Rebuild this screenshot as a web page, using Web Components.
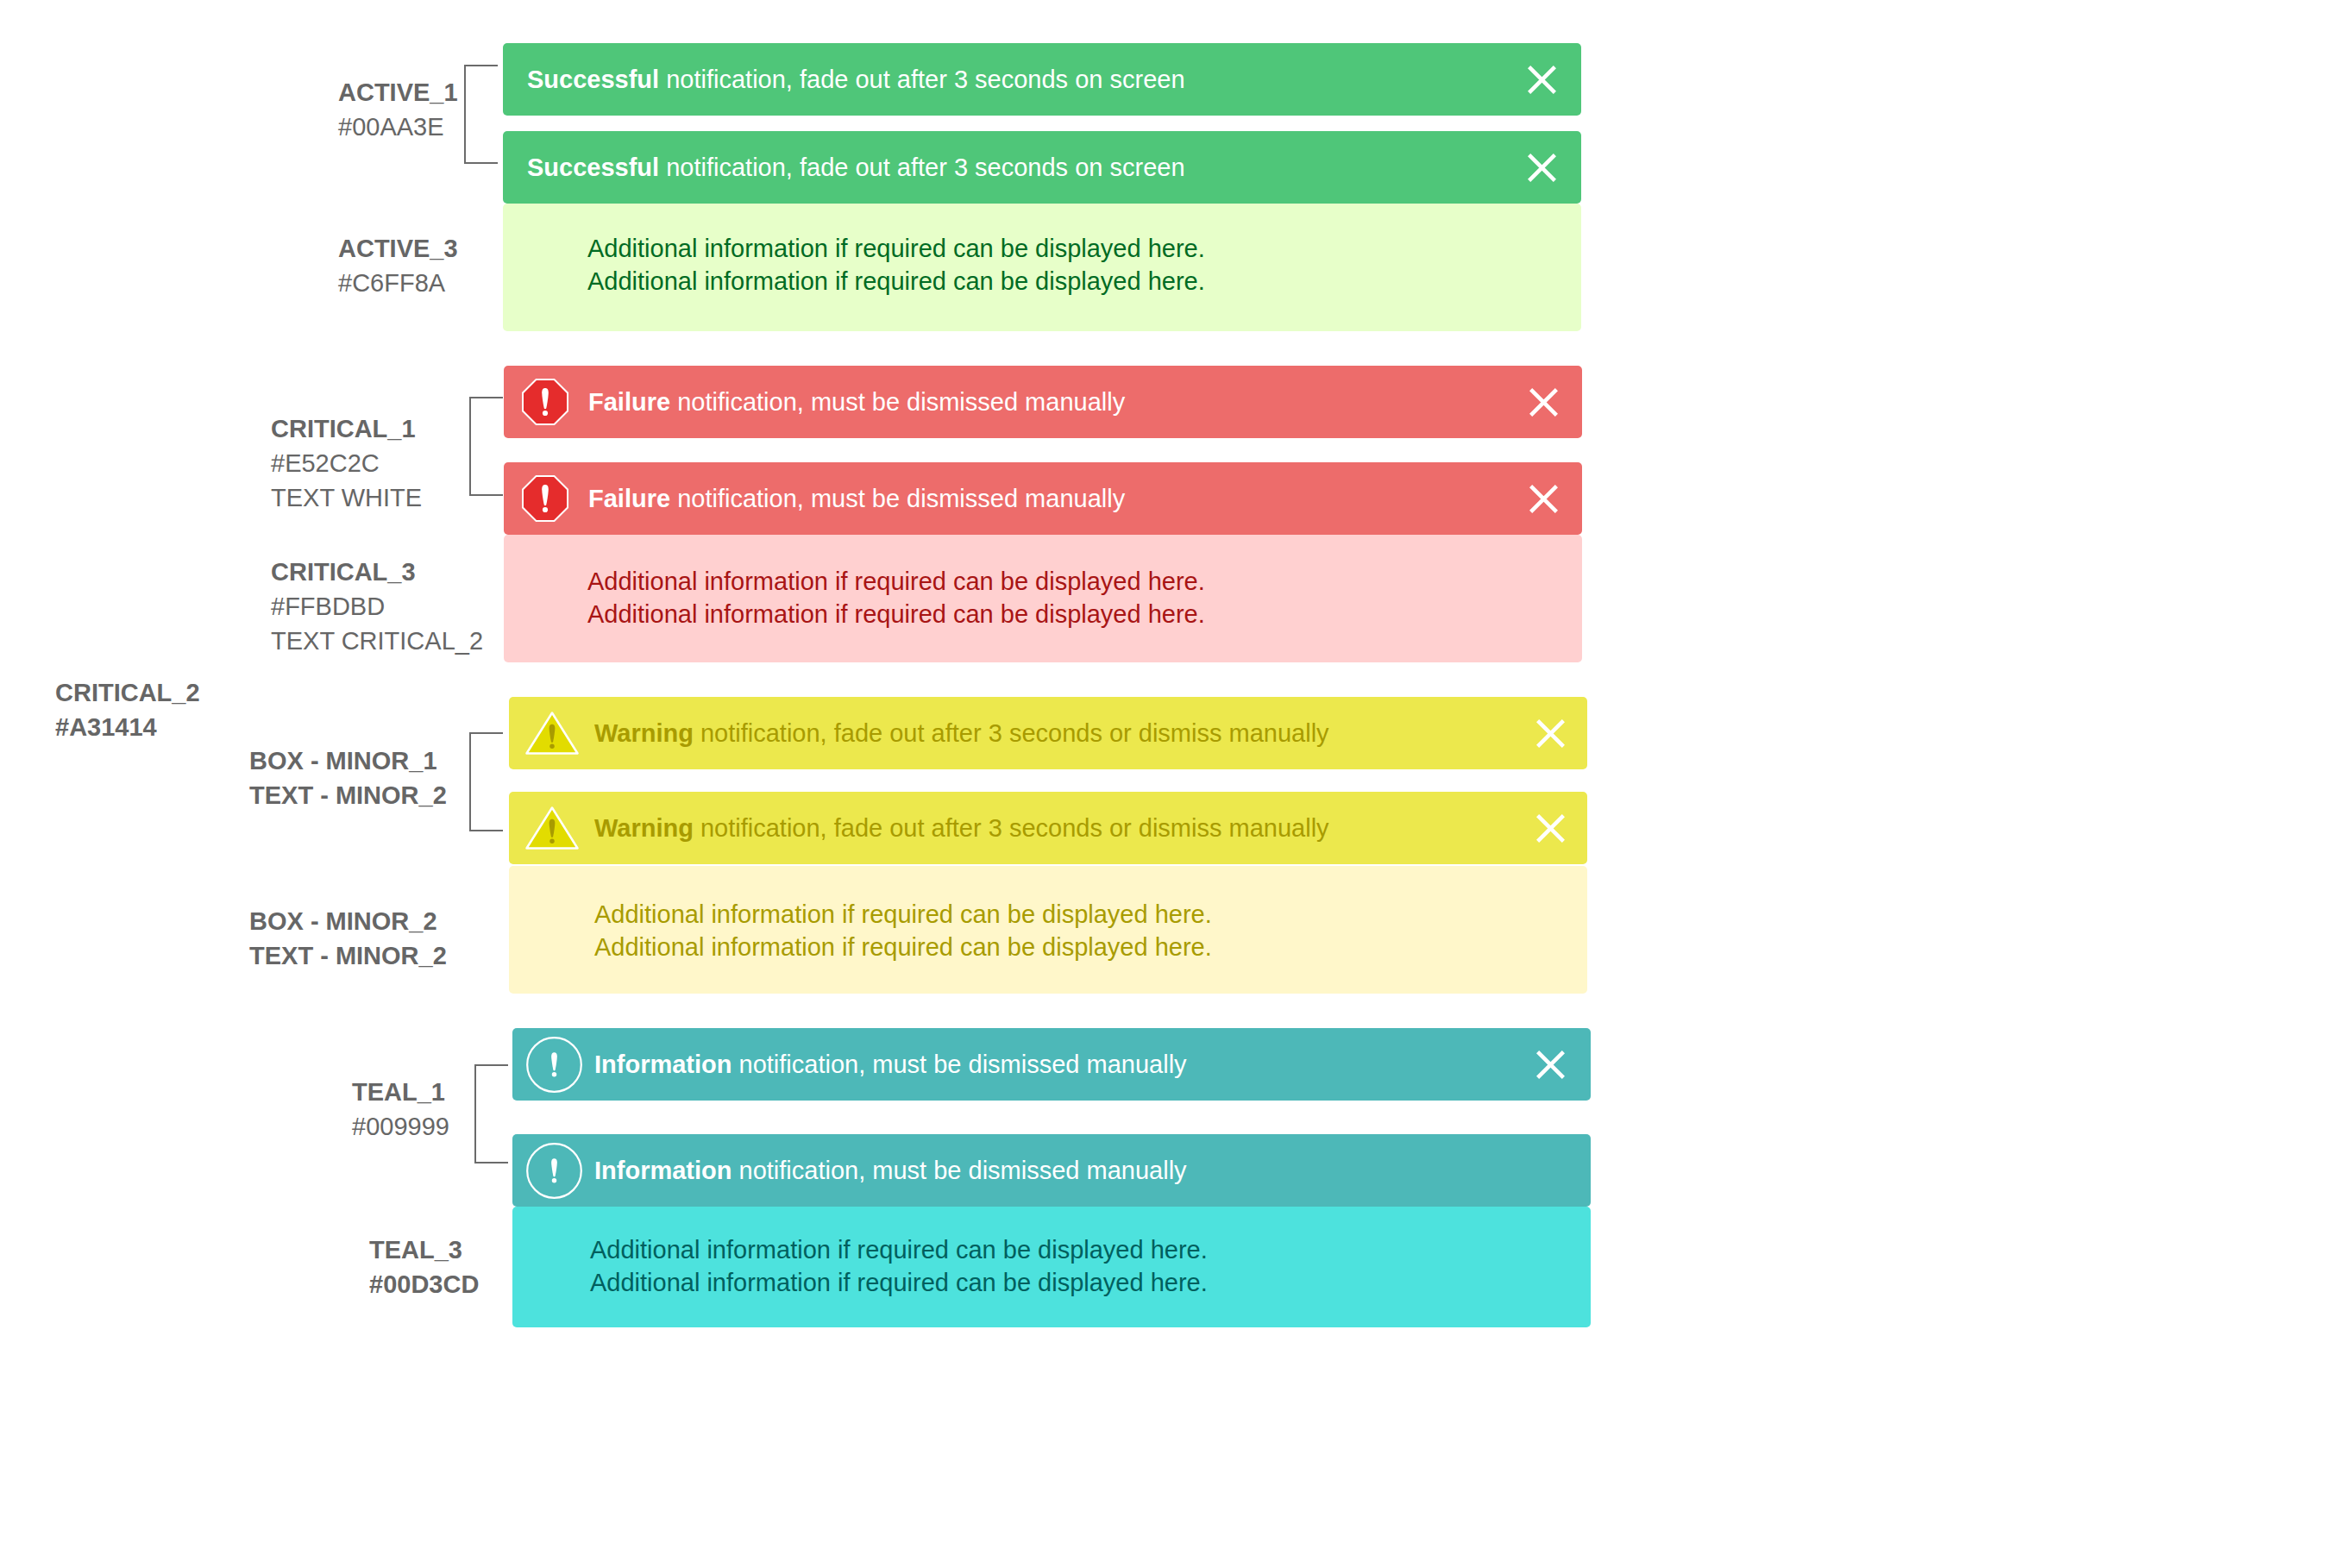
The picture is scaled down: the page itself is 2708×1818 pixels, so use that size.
<!DOCTYPE html>
<html lang="en">
<head>
<meta charset="utf-8">
<title>Notification styles</title>
<style>
body { margin: 0; background: #fff; color: #666; font: 29px/40px "Liberation Sans", Arial, sans-serif; }
</style>
</head>
<body>
<spec-board></spec-board>

<template id="t-board">
<style>
  :host { display: grid; grid-template-columns: 280px minmax(0, 1fr); padding: 50px 0; }
  aside { padding: 733px 0 0 64px; }
  main { display: flex; flex-direction: column; gap: 40px; }
</style>
<aside><colour-note><b>CRITICAL_2</b><b>#A31414</b></colour-note></aside>
<main>
  <spec-group kind="success">
    <colour-note slot="notes"><b>ACTIVE_1</b><span>#00AA3E</span></colour-note>
    <colour-note slot="notes"><b>ACTIVE_3</b><span>#C6FF8A</span></colour-note>
    <notice-bar kind="success" closable><b>Successful</b> notification, fade out after 3 seconds on screen</notice-bar>
    <notice-bar kind="success" closable><b>Successful</b> notification, fade out after 3 seconds on screen
      <span slot="detail">Additional information if required can be displayed here.</span>
      <span slot="detail">Additional information if required can be displayed here.</span>
    </notice-bar>
  </spec-group>
  <spec-group kind="failure">
    <colour-note slot="notes"><b>CRITICAL_1</b><span>#E52C2C</span><span>TEXT WHITE</span></colour-note>
    <colour-note slot="notes"><b>CRITICAL_3</b><span>#FFBDBD</span><span>TEXT CRITICAL_2</span></colour-note>
    <notice-bar kind="failure" closable><b>Failure</b> notification, must be dismissed manually</notice-bar>
    <notice-bar kind="failure" closable><b>Failure</b> notification, must be dismissed manually
      <span slot="detail">Additional information if required can be displayed here.</span>
      <span slot="detail">Additional information if required can be displayed here.</span>
    </notice-bar>
  </spec-group>
  <spec-group kind="warning">
    <colour-note slot="notes"><b>BOX - MINOR_1</b><b>TEXT - MINOR_2</b></colour-note>
    <colour-note slot="notes"><b>BOX - MINOR_2</b><b>TEXT - MINOR_2</b></colour-note>
    <notice-bar kind="warning" closable><b>Warning</b> notification, fade out after 3 seconds or dismiss manually</notice-bar>
    <notice-bar kind="warning" closable><b>Warning</b> notification, fade out after 3 seconds or dismiss manually
      <span slot="detail">Additional information if required can be displayed here.</span>
      <span slot="detail">Additional information if required can be displayed here.</span>
    </notice-bar>
  </spec-group>
  <spec-group kind="info">
    <colour-note slot="notes"><b>TEAL_1</b><span>#009999</span></colour-note>
    <colour-note slot="notes" nested><b>TEAL_3</b><b>#00D3CD</b></colour-note>
    <notice-bar kind="info" closable><b>Information</b> notification, must be dismissed manually</notice-bar>
    <notice-bar kind="info"><b>Information</b> notification, must be dismissed manually
      <span slot="detail">Additional information if required can be displayed here.</span>
      <span slot="detail">Additional information if required can be displayed here.</span>
    </notice-bar>
  </spec-group>
</main>
</template>

<template id="t-note">
<style>
  :host { display: flex; flex-direction: column; white-space: nowrap; }
  :host([nested]) { padding-left: 20px; }
</style>
<slot></slot>
</template>

<template id="t-group">
<style>
  :host { display: grid; grid-template-columns: var(--notes) 39px minmax(0, 1250px); align-items: start; }
  :host([kind=success]) { --notes: 258px; --indent: 112px; --notes-top: 37px; --notes-gap: 101px; --fork: 25px; --lead: 6px; --gap: 18px; }
  :host([kind=failure]) { --notes: 264px; --indent: 34px; --notes-top: 53px; --notes-gap: 46px; --fork: 36px; --lead: 1px; --gap: 28px; }
  :host([kind=warning]) { --notes: 264px; --indent: 9px; --notes-top: 54px; --notes-gap: 106px; --fork: 41px; --lead: 7px; --gap: 26px; }
  :host([kind=info]) { --notes: 270px; --indent: 128px; --notes-top: 54px; --notes-gap: 103px; --fork: 42px; --lead: 5px; --gap: 39px; }
  .notes { display: flex; flex-direction: column; gap: var(--notes-gap); padding: var(--notes-top) 0 0 var(--indent); }
  .fork { height: 115px; box-sizing: border-box; margin-top: var(--fork); border: 2px solid #6b6b6b; border-right: 0; }
  .stack { display: flex; flex-direction: column; gap: var(--gap); margin-left: var(--lead); margin-right: calc(-1 * var(--lead)); }
</style>
<div class="notes"><slot name="notes"></slot></div>
<div class="fork"></div>
<div class="stack"><slot></slot></div>
</template>

<template id="t-notice">
<style>
  :host { display: block; }
  :host([kind=success]) { --bar: #4fc679; --panel: #e7ffc9; --ink: #006b23; --text: #fff; --left: 28px; --right: 29px; --detail: 98px; --detail-top: 33px; --detail-bottom: 39px; }
  :host([kind=failure]) { --bar: #ed6c6b; --panel: #ffd0d0; --ink: #a81414; --text: #fff; --left: 21px; --right: 28px; --space: 23px; --detail: 97px; --detail-top: 35px; --detail-bottom: 37px; }
  :host([kind=warning]) { --bar: #ece84d; --panel: #fff7ca; --ink: #a89b00; --text: #a89b00; --left: 19px; --right: 26px; --space: 18px; --detail: 99px; --detail-top: 37px; --detail-bottom: 35px; --seam: 2px; }
  :host([kind=info]) { --bar: #4db8b8; --panel: #4de2dd; --ink: #005f5e; --text: #fff; --left: 16px; --right: 30px; --space: 14px; --detail: 90px; --detail-top: 31px; --detail-bottom: 33px; }
  header { display: flex; align-items: center; height: 84px; box-sizing: border-box; padding: 0 var(--right) 0 var(--left); border-radius: 5px; background: var(--bar); color: var(--text); }
  .icon { display: flex; margin-right: var(--space, 0px); }
  p { margin: 0; flex: 1; line-height: 38px; }
  button { display: flex; padding: 0; border: 0; background: none; cursor: pointer; }
  svg { display: block; }
  .detail { display: none; flex-direction: column; margin-top: var(--seam, 0px); padding: var(--detail-top) 28px var(--detail-bottom) var(--detail); border-radius: 5px; background: var(--panel); color: var(--ink); line-height: 38px; }
  .detail.open { display: flex; }
</style>
<header>
  <span class="icon"></span>
  <p><slot></slot></p>
  <button type="button" aria-label="Dismiss"><svg width="33" height="33" viewBox="0 0 33 33" fill="none" stroke="#fff" stroke-width="4.500"><path d="M1.6 1.6 31.4 31.4M31.4 1.6 1.6 31.4"/></svg></button>
</header>
<div class="detail"><slot name="detail"></slot></div>
</template>

<script>
const fill = (el, id) => el.attachShadow({ mode: 'open' }).append(document.getElementById(id).content.cloneNode(true));

const MARK = '<path d="M-3.8-12.5C-3.8-17-2-18 0-18S3.8-17 3.8-12.5C3.6-7 1.8 3 1.2 5.5Q0 7-1.2 5.5C-1.8 3-3.6-7-3.8-12.5Z"/><circle cy="11" r="3.1"/>';
const ICONS = {
  failure: `<svg width="54" height="54" viewBox="0 0 54 54"><path d="M16.500 1h21L53 16.500v21L37.500 53h-21L1 37.500v-21Z" fill="#e52c2c" stroke="#fff" stroke-width="2"/><g fill="#fff" transform="translate(27 29)">${MARK}</g></svg>`,
  warning: `<svg width="62" height="50" viewBox="0 0 62 50"><path d="M31 1.500 60.500 48.500h-59Z" fill="#e2dc00" stroke="#fff" stroke-width="2.500" stroke-linejoin="round"/><g fill="#a89b00" transform="translate(31 30.500) scale(.88)">${MARK}</g></svg>`,
  info: `<svg width="65" height="65" viewBox="0 0 65 65"><circle cx="32.500" cy="32.500" r="31.300" fill="none" stroke="#fff" stroke-width="2.200"/><g fill="#fff" transform="translate(32.500 34) scale(.88)">${MARK}</g></svg>`
};

customElements.define('colour-note', class extends HTMLElement {
  constructor() { super(); fill(this, 't-note'); }
});
customElements.define('notice-bar', class extends HTMLElement {
  constructor() { super(); fill(this, 't-notice'); }
  connectedCallback() {
    const root = this.shadowRoot;
    root.querySelector('.icon').innerHTML = ICONS[this.getAttribute('kind')] || '';
    const button = root.querySelector('button');
    if (!this.hasAttribute('closable')) button?.remove();
    else button.onclick = () => this.remove();
    root.querySelector('.detail').classList.toggle('open', !!this.querySelector('[slot=detail]'));
  }
});
customElements.define('spec-group', class extends HTMLElement {
  constructor() { super(); fill(this, 't-group'); }
});
customElements.define('spec-board', class extends HTMLElement {
  constructor() { super(); fill(this, 't-board'); }
});
</script>
</body>
</html>
